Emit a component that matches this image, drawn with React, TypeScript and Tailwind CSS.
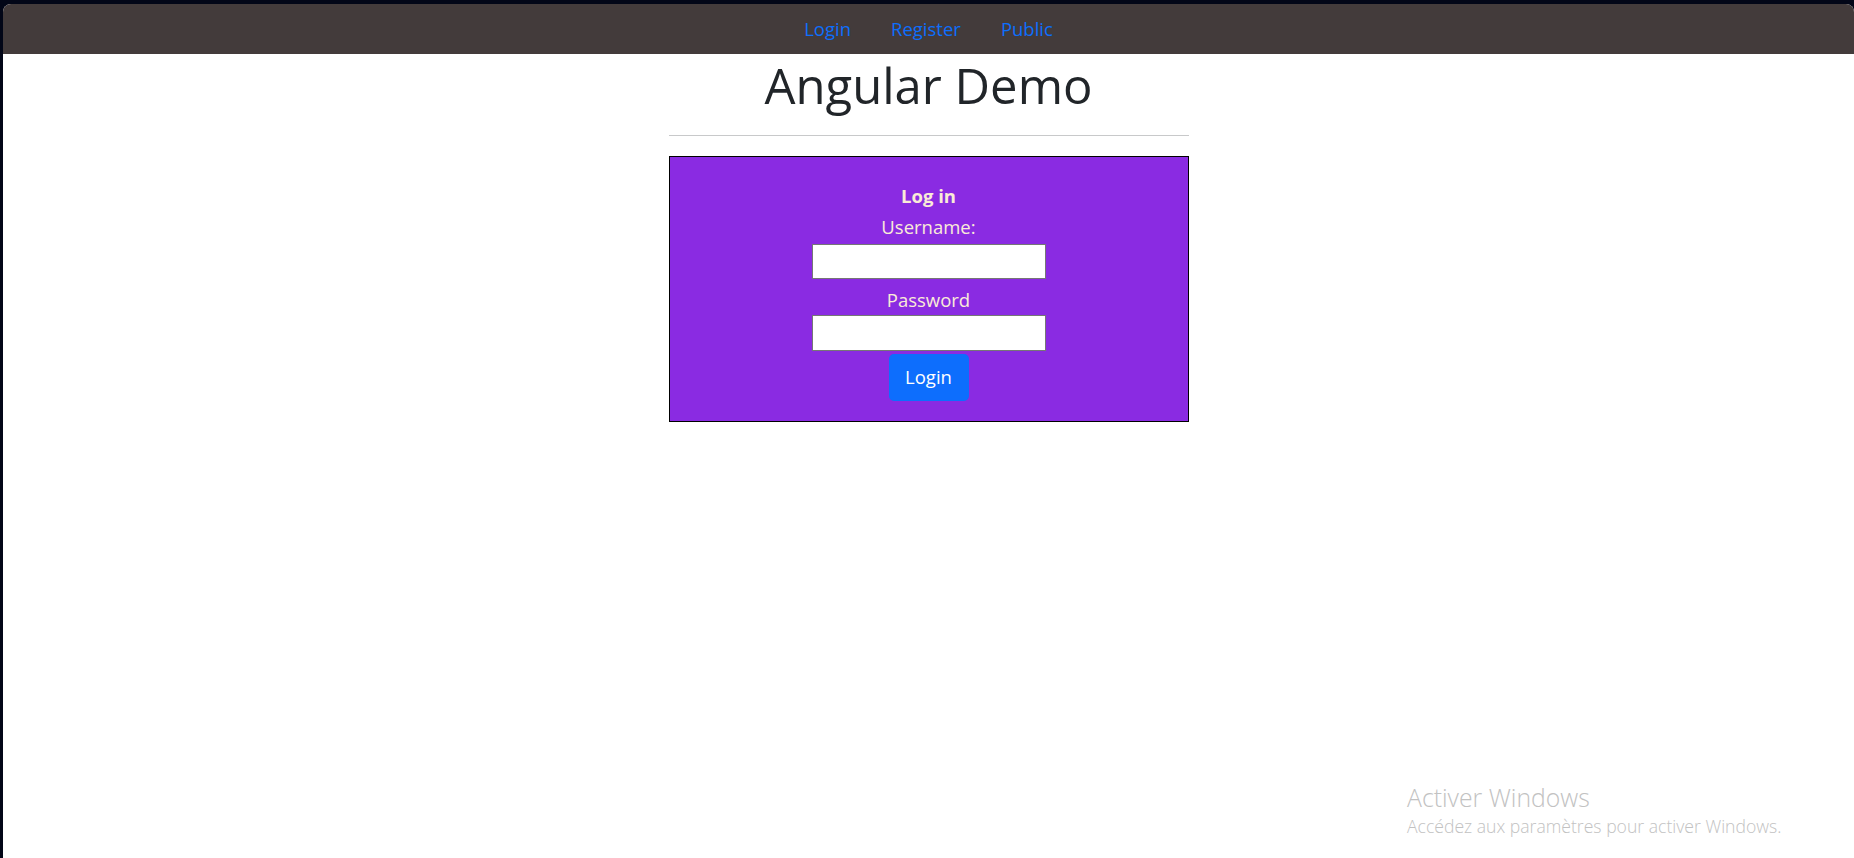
export default function App() {
  const links = ["Login", "Register", "Public"];

  return (
    <div className="relative min-h-screen bg-[#020617] pl-[3px] pt-[4px] font-['Open_Sans',sans-serif]">
      <div className="min-h-[854px] overflow-hidden rounded-t-[8px] bg-white">
        <nav className="flex h-[50px] items-center justify-center gap-[40px] bg-[#433b3b]">
          {links.map((link) => (
            <a key={link} href="#" className="text-[18.5px] text-[#0d6efd]">
              {link}
            </a>
          ))}
        </nav>

        <main className="flex flex-col items-center">
          <h1 className="mt-[2px] text-[49px] font-medium leading-[1.2] text-[#212529]">
            Angular Demo
          </h1>

          <hr className="mt-[20px] w-[520px] border-t border-[#c8c9ca]" />

          <div className="mt-[20px] flex w-[520px] flex-col items-center border border-black bg-[#8a2be2] pb-[20px] pt-[24px] text-[18.5px] leading-[30px] text-[#faebd7]">
            <h5 className="mb-[1px] font-bold">Log in</h5>
            <label>Username:</label>
            <input
              type="text"
              className="mt-[2px] h-[35px] w-[234px] border border-[#767676] bg-white"
            />
            <label className="mt-[6px]">Password</label>
            <input
              type="password"
              className="h-[36px] w-[234px] border border-[#767676] bg-white"
            />
            <button className="mt-[3px] h-[47px] w-[80px] rounded-[5px] bg-[#0d6efd] text-white">
              Login
            </button>
          </div>
        </main>
      </div>

      <div className="absolute left-[1407px] top-[780px] text-[#c2c2c2]">
        <p className="text-[24.8px] font-light leading-[34px]">Activer Windows</p>
        <p className="text-[17.6px] font-light leading-[24px]">
          Accédez aux paramètres pour activer Windows.
        </p>
      </div>
    </div>
  );
}
